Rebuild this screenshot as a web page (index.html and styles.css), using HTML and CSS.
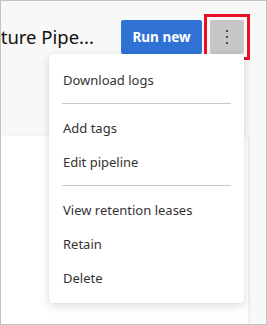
FILE: index.html
```html
<!DOCTYPE html>
<html lang="en">
  <head>
    <meta charset="UTF-8" />
    <title>Pipeline run</title>
    <link rel="stylesheet" href="styles.css">
  </head>
  <body>
    <div class="header">
      <div class="title-wrap">
        <h1 class="title">Fixture Pipe...</h1>
      </div>
      <button class="primary">Run new</button>
      <div class="highlight">
        <button class="more" aria-label="More actions">
          <span class="dot"></span>
          <span class="dot"></span>
          <span class="dot"></span>
        </button>
      </div>
    </div>

    <div class="card"></div>

    <div class="menu">
      <div class="menu-item">Download logs</div>
      <div class="separator"></div>
      <div class="menu-item">Add tags</div>
      <div class="menu-item">Edit pipeline</div>
      <div class="separator"></div>
      <div class="menu-item">View retention leases</div>
      <div class="menu-item">Retain</div>
      <div class="menu-item">Delete</div>
    </div>
  </body>
</html>
```

FILE: styles.css
```css
html, body {
  margin: 0;
  padding: 0;
}

body {
  position: relative;
  width: 267px;
  height: 325px;
  box-sizing: border-box;
  border: 1px solid #c2c2c2;
  background-color: #f8f8f8;
  font-family: 'Segoe UI', 'Noto Sans', sans-serif;
  overflow: hidden;
}

.header {
  display: flex;
  align-items: center;
  height: 47px;
  padding: 12px 16px 0 0;
}

.title-wrap {
  flex: 1;
  display: flex;
  justify-content: flex-end;
  min-width: 0;
  overflow: hidden;
  margin-right: 27px;
}

.title {
  flex-shrink: 0;
  margin: 0;
  font-size: 18.5px;
  font-weight: 400;
  color: #111;
  white-space: nowrap;
}

button {
  border: none;
  border-radius: 2px;
  cursor: pointer;
  font-family: inherit;
}

.primary {
  flex-shrink: 0;
  width: 81px;
  height: 34px;
  padding: 0;
  background-color: #2f72d3;
  color: white;
  font-size: 13.5px;
  font-weight: 700;
}

.highlight {
  flex-shrink: 0;
  margin-left: 2px;
  padding: 3px;
  border: 3px solid #e81123;
}

.more {
  display: flex;
  flex-direction: column;
  align-items: center;
  justify-content: center;
  gap: 4px;
  width: 34px;
  height: 34px;
  padding: 0;
  background-color: #c6c6c6;
}

.dot {
  width: 2px;
  height: 2px;
  background-color: #5a4a30;
}

.card {
  height: 189px;
  margin: 76px 18px 0 0;
  background-color: white;
  border-top-right-radius: 4px;
  box-shadow: 1px 0 3px rgba(0, 0, 0, 0.06);
}

.menu {
  position: absolute;
  top: 53px;
  left: 48px;
  width: 195px;
  padding: 9px 0 8px;
  background-color: white;
  border-radius: 4px;
  box-shadow: 0 3px 10px rgba(0, 0, 0, 0.14), 0 0 2px rgba(0, 0, 0, 0.06);
}

.menu-item {
  height: 34px;
  line-height: 34px;
  padding-left: 14px;
  font-size: 13px;
  color: #333;
  white-space: nowrap;
}

.separator {
  height: 1px;
  margin: 6px 13px 7px;
  background-color: #c8c8c8;
}
```
